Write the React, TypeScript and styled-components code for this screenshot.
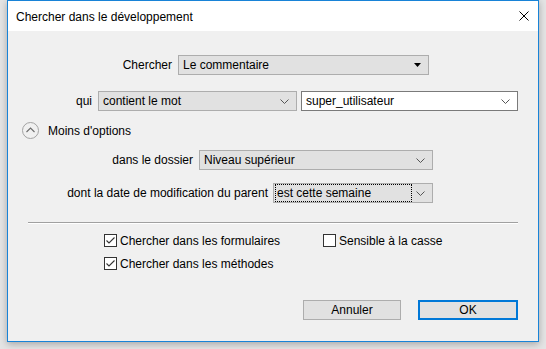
import React from 'react'
import styled, { createGlobalStyle } from 'styled-components'


export default function App(): JSX.Element {
    return (
        <>
            <GlobalStyle/>
            <Screen>
                <Dialog>
                    <TitleBar>
                        <Title>Chercher dans le développement</Title>
                        <CloseIcon viewBox="0 0 10 10" aria-hidden={true}>
                            <path d="M0.5 0.5 L9.5 9.5 M9.5 0.5 L0.5 9.5" />
                        </CloseIcon>
                    </TitleBar>

                    <Body>
                        <Row $top={24}>
                            <Label $width={164}>Chercher</Label>
                            <Select $width={251}>
                                <SelectText>Le commentaire</SelectText>
                                <SolidArrow viewBox="0 0 7 4"><path d="M0 0 H7 L3.5 4 Z" /></SolidArrow>
                            </Select>
                        </Row>

                        <Row $top={16}>
                            <Label $width={84}>qui</Label>
                            <Select $width={199}>
                                <SelectText>contient le mot</SelectText>
                                <Chevron/>
                            </Select>
                            <Combo $width={217}>
                                <SelectText>super_utilisateur</SelectText>
                                <Chevron/>
                            </Combo>
                        </Row>

                        <Toggle>
                            <CircleIcon viewBox="0 0 17 17" aria-hidden={true}>
                                <circle cx="8.5" cy="8.5" r="8" />
                                <path d="M4.5 10 L8.5 6 L12.5 10" />
                            </CircleIcon>
                            <span>Moins d'options</span>
                        </Toggle>

                        <Row $top={11}>
                            <Label $width={185}>dans le dossier</Label>
                            <Select $width={234}>
                                <SelectText>Niveau supérieur</SelectText>
                                <Chevron/>
                            </Select>
                        </Row>

                        <Row $top={13} $gap={5}>
                            <Label $width={260}>dont la date de modification du parent</Label>
                            <Select $width={160}>
                                <FocusText>est cette semaine</FocusText>
                                <Chevron/>
                            </Select>
                        </Row>

                        <Separator/>

                        <Checks>
                            <Check checked label="Chercher dans les formulaires"/>
                            <Check label="Sensible à la casse"/>
                            <Check checked label="Chercher dans les méthodes"/>
                        </Checks>

                        <Buttons>
                            <Button $width={98}>Annuler</Button>
                            <Button $width={100} $primary>OK</Button>
                        </Buttons>
                    </Body>
                </Dialog>
            </Screen>
        </>
    )
}


function Chevron(): JSX.Element {
    return (
        <ChevronIcon viewBox="0 0 9 5" aria-hidden={true}>
            <path d="M0.5 0.5 L4.5 4.5 L8.5 0.5" />
        </ChevronIcon>
    )
}

function Check(props: { checked?: boolean, label: string }): JSX.Element {
    return (
        <CheckRow>
            <Box>
                {props.checked &&
                    <svg viewBox="0 0 11 11" aria-hidden={true}>
                        <path d="M1.5 5.5 L4 8 L9.5 2.5" />
                    </svg>
                }
            </Box>
            <span>{props.label}</span>
        </CheckRow>
    )
}


const GlobalStyle = createGlobalStyle`
    html, body {
        margin: 0;
        padding: 0;
        background: #e4e4e4;
    }
    body {
        font-family: "Liberation Sans", Arial, sans-serif;
        font-size: 12px;
        color: #000;
    }
`

const Screen = styled.div`
    width: 546px;
    height: 349px;
    padding: 0 0 0 7px;
    box-sizing: border-box;
    overflow: hidden;
`

const Dialog = styled.div`
    width: 532px;
    height: 342px;
    box-sizing: border-box;
    border: 1px solid #1883d7;
    background: #f0f0f0;
    box-shadow: 0 2px 7px rgba(0, 0, 0, 0.28);
    display: flex;
    flex-direction: column;
`

const TitleBar = styled.div`
    height: 30px;
    background: #fff;
    display: flex;
    align-items: center;
    justify-content: space-between;
    padding: 0 9px 0 8px;
`

const Title = styled.span`
    font-size: 12px;
    margin-top: 1px;
`

const CloseIcon = styled.svg`
    width: 10px;
    height: 10px;
    & path {
        stroke: #000;
        stroke-width: 1;
        fill: none;
    }
`

const Body = styled.div`
    flex: 1;
    display: flex;
    flex-direction: column;
`

const Row = styled.div<{ $top: number, $gap?: number }>`
    display: flex;
    align-items: center;
    gap: ${p => p.$gap ?? 6}px;
    margin-top: ${p => p.$top}px;
    height: 20px;
`

const Label = styled.span<{ $width: number }>`
    width: ${p => p.$width}px;
    text-align: right;
    white-space: nowrap;
`

const Select = styled.div<{ $width: number }>`
    width: ${p => p.$width}px;
    height: 20px;
    box-sizing: border-box;
    background: #e1e1e1;
    border: 1px solid #adadad;
    display: flex;
    align-items: center;
    justify-content: space-between;
    padding: 0 7px 0 3px;
`

const Combo = styled(Select)`
    background: #fff;
    border-color: #7a7a7a;
    margin-left: -2px;
`

const SelectText = styled.span`
    padding-left: 1px;
    white-space: nowrap;
`

const FocusText = styled.span`
    outline: 1px dotted #000;
    width: 134px;
    height: 16px;
    line-height: 16px;
    margin-left: -1px;
    padding-left: 1px;
    white-space: nowrap;
`

const SolidArrow = styled.svg`
    width: 7px;
    height: 4px;
    margin-right: 0;
    & path { fill: #000; }
`

const ChevronIcon = styled.svg`
    width: 9px;
    height: 5px;
    & path {
        stroke: #555;
        stroke-width: 1;
        fill: none;
    }
`

const Toggle = styled.div`
    display: flex;
    align-items: center;
    gap: 9px;
    margin-top: 11px;
    padding-left: 14px;
    height: 17px;
`

const CircleIcon = styled.svg`
    width: 17px;
    height: 17px;
    & circle {
        stroke: #a3a3a3;
        fill: none;
        stroke-width: 1;
    }
    & path {
        stroke: #6a6a6a;
        fill: none;
        stroke-width: 1.1;
    }
`

const Separator = styled.div`
    height: 1px;
    background: #a0a0a0;
    margin: 19px 20px 0 20px;
    border-bottom: 1px solid #fff;
    background-clip: content-box;
    box-sizing: content-box;
`

const Checks = styled.div`
    display: grid;
    grid-template-columns: 219px auto;
    row-gap: 10px;
    padding-left: 96px;
    margin-top: 10px;
`

const CheckRow = styled.label`
    display: flex;
    align-items: center;
    gap: 3px;
    height: 13px;
`

const Box = styled.span`
    width: 13px;
    height: 13px;
    box-sizing: border-box;
    border: 1px solid #333;
    background: #fff;
    display: flex;
    align-items: center;
    justify-content: center;
    & svg {
        width: 11px;
        height: 11px;
    }
    & path {
        stroke: #333;
        stroke-width: 1.1;
        fill: none;
    }
`

const Buttons = styled.div`
    display: flex;
    justify-content: flex-end;
    gap: 17px;
    margin-top: 30px;
    padding-right: 20px;
`

const Button = styled.button<{ $width: number, $primary?: boolean }>`
    width: ${p => p.$width}px;
    height: 20px;
    box-sizing: border-box;
    background: #e1e1e1;
    border: ${p => p.$primary ? '2px solid #0078d7' : '1px solid #adadad'};
    font-family: "Liberation Sans", Arial, sans-serif;
    font-size: 12px;
    color: #000;
    padding: 0;
    margin: 0;
`
